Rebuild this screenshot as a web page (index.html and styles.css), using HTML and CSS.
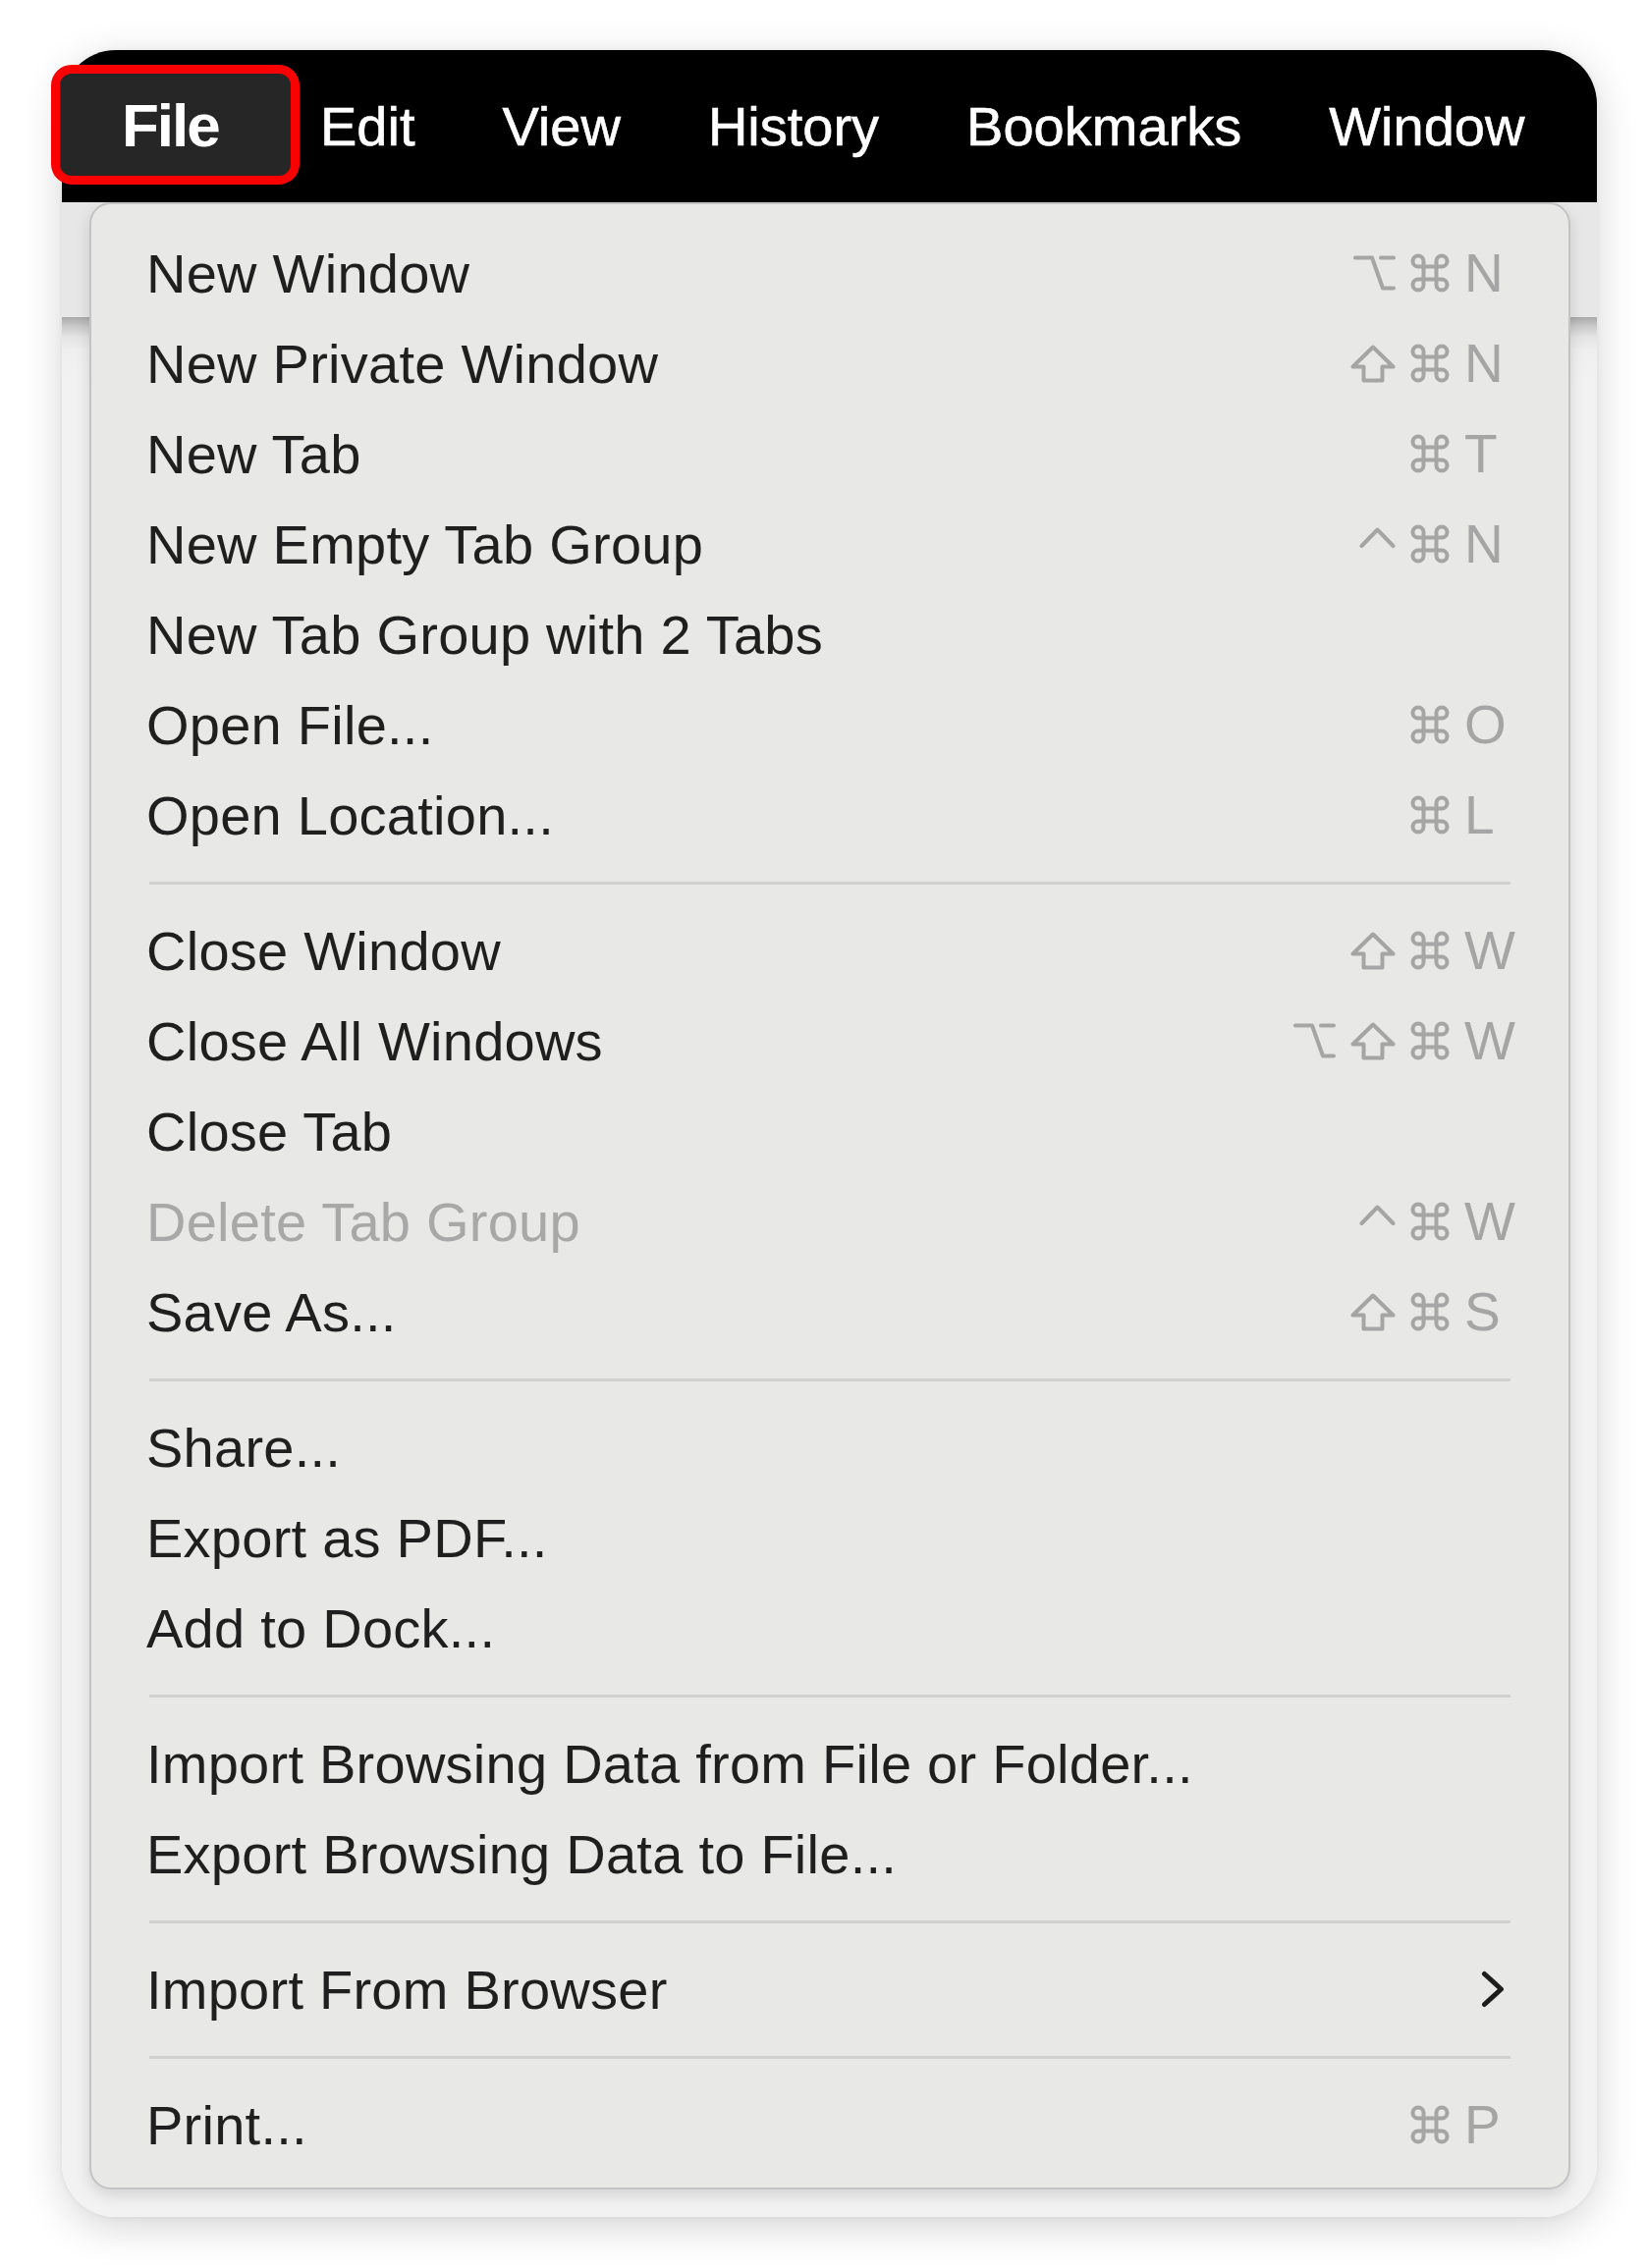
FILE: index.html
```html
<!DOCTYPE html>
<html lang="en">
<head>
<meta charset="utf-8">
<title>Safari File menu</title>
<link rel="stylesheet" href="styles.css">
</head>
<body>
<svg class="defs" width="0" height="0" aria-hidden="true">
  <defs>
    <symbol id="cmd" viewBox="0 0 40 40">
      <path d="M13.5 13.5H26.5V26.5H13.5Z M13.5 13.5V8A5.5 5.5 0 1 0 8 13.5H13.5 M26.5 13.5V8A5.5 5.5 0 1 1 32 13.5H26.5 M26.5 26.5V32A5.5 5.5 0 1 0 32 26.5H26.5 M13.5 26.5V32A5.5 5.5 0 1 1 8 26.5H13.5"/>
    </symbol>
    <symbol id="shift" viewBox="0 0 46 39">
      <path d="M23 2.5L43.5 22.5H32.5V36.5H13.5V22.5H2.5Z"/>
    </symbol>
    <symbol id="opt" viewBox="0 0 43 38">
      <path d="M2 3.5H19L30 34.5H41 M28 3.5H41"/>
    </symbol>
    <symbol id="ctrl" viewBox="0 0 37 39">
      <path d="M2.5 21L18.5 4.5L34.5 21"/>
    </symbol>
  </defs>
</svg>

<div class="stage">
  <div class="window">
    <div class="menubar">
      <div class="mb-file">File</div>
      <div class="mb-item">Edit</div>
      <div class="mb-item">View</div>
      <div class="mb-item">History</div>
      <div class="mb-item">Bookmarks</div>
      <div class="mb-item">Window</div>
    </div>

    <div class="menu">
      <div class="row"><span class="label">New Window</span><span class="sc"><svg class="k-opt"><use href="#opt"/></svg><svg class="k-cmd"><use href="#cmd"/></svg><span class="key">N</span></span></div>
      <div class="row"><span class="label">New Private Window</span><span class="sc"><svg class="k-shift"><use href="#shift"/></svg><svg class="k-cmd"><use href="#cmd"/></svg><span class="key">N</span></span></div>
      <div class="row"><span class="label">New Tab</span><span class="sc"><svg class="k-cmd"><use href="#cmd"/></svg><span class="key">T</span></span></div>
      <div class="row"><span class="label">New Empty Tab Group</span><span class="sc"><svg class="k-ctrl"><use href="#ctrl"/></svg><svg class="k-cmd"><use href="#cmd"/></svg><span class="key">N</span></span></div>
      <div class="row"><span class="label">New Tab Group with 2 Tabs</span></div>
      <div class="row"><span class="label">Open File...</span><span class="sc"><svg class="k-cmd"><use href="#cmd"/></svg><span class="key">O</span></span></div>
      <div class="row"><span class="label">Open Location...</span><span class="sc"><svg class="k-cmd"><use href="#cmd"/></svg><span class="key">L</span></span></div>
      <div class="sep"></div>
      <div class="row"><span class="label">Close Window</span><span class="sc"><svg class="k-shift"><use href="#shift"/></svg><svg class="k-cmd"><use href="#cmd"/></svg><span class="key">W</span></span></div>
      <div class="row"><span class="label">Close All Windows</span><span class="sc"><svg class="k-opt"><use href="#opt"/></svg><svg class="k-shift"><use href="#shift"/></svg><svg class="k-cmd"><use href="#cmd"/></svg><span class="key">W</span></span></div>
      <div class="row"><span class="label">Close Tab</span></div>
      <div class="row disabled"><span class="label">Delete Tab Group</span><span class="sc"><svg class="k-ctrl"><use href="#ctrl"/></svg><svg class="k-cmd"><use href="#cmd"/></svg><span class="key">W</span></span></div>
      <div class="row"><span class="label">Save As...</span><span class="sc"><svg class="k-shift"><use href="#shift"/></svg><svg class="k-cmd"><use href="#cmd"/></svg><span class="key">S</span></span></div>
      <div class="sep"></div>
      <div class="row"><span class="label">Share...</span></div>
      <div class="row"><span class="label">Export as PDF...</span></div>
      <div class="row"><span class="label">Add to Dock...</span></div>
      <div class="sep"></div>
      <div class="row"><span class="label">Import Browsing Data from File or Folder...</span></div>
      <div class="row"><span class="label">Export Browsing Data to File...</span></div>
      <div class="sep"></div>
      <div class="row"><span class="label">Import From Browser</span><svg class="chev" viewBox="0 0 24 38"><path d="M3.5 3.5L20.5 19L3.5 34.5"/></svg></div>
      <div class="sep"></div>
      <div class="row"><span class="label">Print...</span><span class="sc"><svg class="k-cmd"><use href="#cmd"/></svg><span class="key">P</span></span></div>
    </div>
  </div>
</div>
</body>
</html>
```

FILE: styles.css
```css
html, body {
  margin: 0;
  padding: 0;
  background: #ffffff;
}

body {
  font-family: "Liberation Sans", Arial, sans-serif;
}

.defs {
  position: absolute;
  width: 0;
  height: 0;
  overflow: hidden;
}

.stage {
  padding: 51px 0 52px 63px;
}

.window {
  width: 1563px;
  border-radius: 55px;
  background: linear-gradient(to bottom,
    #e7e7e7 0px,
    #e7e7e7 272px,
    #a9a9a9 272px,
    #c9c9c9 281px,
    #e4e4e4 292px,
    #efefef 306px,
    #f2f2f2 340px,
    #f2f2f2 100%);
  box-shadow: 0 10px 42px rgba(0, 0, 0, 0.17), 0 0 6px rgba(0, 0, 0, 0.05);
  padding-bottom: 28px;
}

/* ---------- menu bar ---------- */
.menubar {
  height: 155px;
  background: #000000;
  border-radius: 55px 55px 0 0;
  display: flex;
  align-items: center;
  color: #ffffff;
  font-size: 56px;
  white-space: nowrap;
}

.mb-file {
  flex-shrink: 0;
  box-sizing: border-box;
  width: 253px;
  height: 122px;
  margin-left: -11px;
  margin-right: 21px;
  margin-top: -3px;
  padding-left: 63px;
  display: flex;
  align-items: center;
  border: 9px solid #fb0000;
  border-radius: 21px;
  background: #262626;
  font-weight: bold;
  font-size: 62px;
  letter-spacing: -2px;
}

.mb-item {
  flex-shrink: 0;
  margin-right: 89px;
  -webkit-text-stroke: 0.6px #ffffff;
}

.mb-item:last-child {
  margin-right: 0;
}

/* ---------- dropdown ---------- */
.menu {
  margin: 0 27px 0 28px;
  border: 2px solid #c3c3c3;
  border-radius: 22px;
  background: #e8e8e7;
  padding: 24px 59px 18px 56px;
  box-shadow: 0 6px 16px rgba(0, 0, 0, 0.13);
}

.row {
  display: flex;
  align-items: center;
  height: 92px;
  font-size: 56px;
  letter-spacing: 0.25px;
  color: #1f1f1f;
  white-space: nowrap;
}

.row.disabled {
  color: #a8a8a8;
}

.label {
  flex: 1;
}

.sc {
  display: flex;
  align-items: center;
  gap: 15px;
  color: #a5a5a5;
  letter-spacing: 0;
}

.sc svg {
  display: block;
  fill: none;
  stroke: #a5a5a5;
  stroke-width: 4;
  stroke-linejoin: round;
  stroke-linecap: round;
}

.k-cmd {
  width: 40px;
  height: 40px;
}

.k-shift {
  width: 46px;
  height: 39px;
}

.k-opt {
  width: 43px;
  height: 38px;
  stroke-linecap: butt;
}

.k-ctrl {
  width: 37px;
  height: 39px;
}

.key {
  width: 47px;
  font-size: 55px;
}

.chev {
  display: block;
  width: 24px;
  height: 38px;
  margin-right: 6px;
  fill: none;
  stroke: #1d1d1d;
  stroke-width: 5;
  stroke-linecap: round;
  stroke-linejoin: round;
}

.sep {
  height: 3px;
  margin: 22px 0 21px 3px;
  background: #d1d1d1;
}
```
